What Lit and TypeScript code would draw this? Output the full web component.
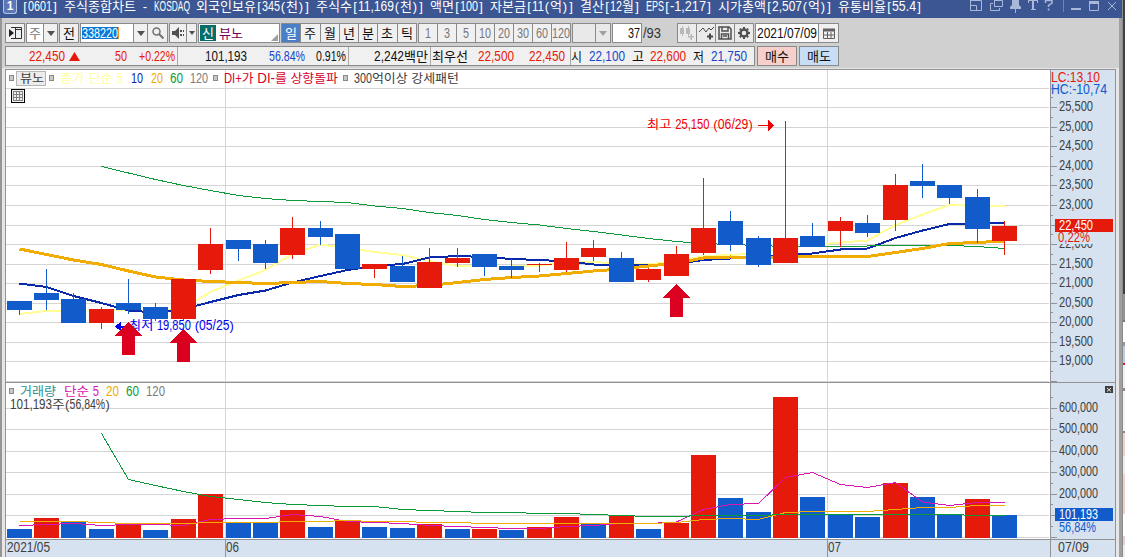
import { LitElement, html, svg, css, nothing } from "lit";
import { customElement } from "lit/decorators.js";

type Candle = [x: number, high: number, top: number, bottom: number, low: number, up: number, volTop: number, volUp: number];

// x, high, body top, body bottom, low, rising?, volume top, volume rising?
const CANDLES: Candle[] = [
  [19, 301, 301, 310, 315, 0, 529, 0],
  [46, 269, 293, 300, 310, 0, 518, 1],
  [73, 293, 299, 323, 323, 0, 522, 0],
  [101, 307, 309, 323, 329, 1, 529, 0],
  [128, 279, 303, 310, 314, 0, 524, 1],
  [155, 303, 307, 319, 321, 0, 530, 0],
  [183, 279, 279, 319, 320, 1, 519, 1],
  [210, 228, 244, 270, 274, 1, 494, 1],
  [238, 240, 240, 249, 261, 0, 523, 0],
  [265, 240, 244, 263, 269, 0, 523, 0],
  [292, 217, 228, 255, 259, 1, 510, 1],
  [320, 221, 228, 237, 245, 0, 527, 0],
  [347, 234, 234, 269, 269, 0, 520, 1],
  [374, 264, 264, 269, 278, 1, 527, 0],
  [402, 256, 266, 282, 282, 0, 528, 0],
  [429, 248, 262, 288, 288, 1, 524, 1],
  [457, 248, 258, 263, 267, 1, 529, 0],
  [484, 254, 254, 267, 276, 0, 529, 1],
  [511, 259, 266, 270, 278, 0, 530, 0],
  [539, 263, 264, 265, 272, 1, 527, 1],
  [566, 242, 258, 270, 272, 1, 517, 1],
  [593, 240, 248, 257, 261, 1, 524, 0],
  [621, 252, 258, 282, 282, 0, 515, 1],
  [648, 268, 269, 280, 282, 1, 529, 0],
  [676, 246, 254, 276, 276, 1, 523, 1],
  [703, 178, 228, 253, 255, 1, 455, 1],
  [730, 211, 221, 245, 251, 0, 498, 0],
  [758, 236, 238, 265, 267, 0, 512, 0],
  [785, 121, 238, 263, 263, 1, 397, 1],
  [812, 223, 236, 247, 247, 0, 497, 0],
  [840, 217, 221, 231, 247, 1, 514, 0],
  [867, 215, 223, 233, 237, 0, 517, 0],
  [895, 174, 185, 220, 231, 1, 483, 1],
  [922, 164, 181, 186, 198, 0, 497, 0],
  [949, 185, 185, 198, 204, 0, 514, 0],
  [977, 189, 197, 229, 243, 0, 499, 1],
  [1004, 221, 226, 241, 255, 1, 515, 0],
];

const PRICE_LINES = [
  { cls: "ma5", from: 0, ys: [314, 311, 310.5, 310.5, 310, 312, 308, 292, 280.5, 270, 254, 244.5, 248, 252, 255, 261, 266, 266.5, 266.5, 265.5, 263, 262, 264, 264, 262, 256, 255, 253, 247, 245, 242.5, 240.5, 225, 214.5, 205, 206, 206] },
  { cls: "ma10", from: 0, ys: [283.5, 287, 296, 303, 310.5, 312.5, 309, 302, 295, 290.5, 282.5, 276, 270, 266, 264, 257.5, 256, 257, 259, 260, 261.5, 264.5, 265, 265.5, 264, 260, 258.5, 257, 254.5, 253.5, 249.5, 248.5, 238, 230.5, 224, 223.5, 223] },
  { cls: "ma60", from: 3, ys: [166.5, 173, 179.5, 185.5, 190.5, 195.5, 198.5, 200.5, 201.5, 202.5, 206, 208.5, 212.5, 215.5, 219.5, 222.5, 225, 228.5, 231.5, 235, 238.5, 241.5, 243.5, 244.5, 245.5, 246.5, 246.5, 246.5, 246, 245.5, 245.5, 245.5, 246.5, 248.5] },
  { cls: "ma20", from: 0, ys: [249, 254.5, 260, 264.5, 271, 277, 280, 281.5, 282.5, 283.5, 282.5, 281.5, 283.5, 284.5, 286.5, 285.5, 282.5, 279.5, 277.5, 276, 273.5, 271, 269, 266, 263, 258, 257, 258, 257, 256.5, 256.5, 256.5, 252.5, 248.5, 243.5, 242.5, 241] },
];

const VOLUME_LINES = [
  { cls: "vol5", from: 0, ys: [525.5, 524.5, 523.5, 525.5, 524.5, 524.5, 525.5, 519.5, 518.5, 518.5, 514.5, 516.5, 521.5, 522.5, 523.5, 525.5, 526.5, 527.5, 528.5, 528.5, 526.5, 525.5, 523.5, 523.5, 522, 509.5, 504.5, 503.5, 477.5, 472.5, 484.5, 487.5, 482.5, 502, 505.5, 502.5, 502.5] },
  { cls: "vol20", from: 0, ys: [521.5, 521.5, 521.5, 522.5, 523.5, 523.5, 523.5, 522.5, 522.5, 522.5, 521.5, 521.5, 520.5, 521.5, 521.5, 522.5, 522.5, 523.5, 523.5, 523.5, 523.5, 523.5, 523.5, 523.5, 522.5, 519.5, 518.5, 519.5, 512.5, 511.5, 511.5, 511.5, 509.5, 507.5, 507.5, 505.5, 505.5] },
  { cls: "ma60", from: 3, ys: [433.5, 479.5, 485.5, 491.5, 496.5, 499.5, 502.5, 504.5, 505.5, 506.5, 506.5, 509.5, 510.5, 511.5, 512.5, 512.5, 513.5, 513.5, 514.5, 515.5, 516.5, 516.5, 515.5, 515.5, 515.5, 514.5, 514.5, 514.5, 514.5, 514.5, 514.5, 514.5, 515.5, 515.5] },
];

const PRICE_ROWS: [number, string][] = [
  [88, ""], [107, "25,500"], [127, "25,000"], [146, "24,500"], [166, "24,000"],
  [185, "23,500"], [205, "23,000"], [225, ""], [244, "22,000"], [264, "21,500"],
  [283, "21,000"], [303, "20,500"], [322, "20,000"], [342, "19,500"], [361, "19,000"], [381, ""],
];

const VOLUME_ROWS: [number, string][] = [
  [408, "600,000"], [429, "500,000"], [451, "400,000"], [472, "300,000"], [494, "200,000"], [515, ""], [537, ""],
];

const TITLE = "[0601] 주식종합차트 - KOSDAQ 외국인보유[345(천)] 주식수[11,169(천)] 액면[100] 자본금[11(억)] 결산[12월] EPS[-1,217] 시가총액[2,507(억)] 유통비율[55.4]";

// text, width, colour class
const QUOTES: [string, number, string][] = [
  ["22,450", 36, "red"], ["▲", 0, ""], ["50", 12, "red"], ["+0.22%", 36, "red"], ["|", 0, ""],
  ["101,193", 42, ""], ["56.84%", 36, "blue"], ["0.91%", 30, ""], ["|", 0, ""],
  ["2,242백만", 54, ""], ["|", 0, ""],
  ["최우선", 36, ""], ["22,500", 36, "red"], ["22,450", 36, "red"], ["|", 0, ""],
  ["시", 11, ""], ["22,100", 36, "blue"], ["고", 12, ""], ["22,600", 36, "red"], ["저", 11, ""], ["21,750", 36, "blue"],
];

const isHangul = (s: string) => /[가-힣]/.test(s);

function units(s: string, mono: boolean) {
  let n = 0;
  for (const c of s) {
    if (isHangul(c)) n += 2;
    else if (!mono && /[\s,.:]/.test(c)) n += 0.6;
    else if (!mono && /[()]/.test(c)) n += 0.75;
    else n += 1;
  }
  return n;
}

// Hangul takes two cells and everything else one, scaled so the run fills the width.
// Brackets sit in the middle of their cell and keep their own shape.
function runs(x: number, y: number, width: number, text: string, cls = "", mono = false) {
  const scale = width / units(text, mono);
  let at = x;
  return (text.match(/[가-힣]+|[()[\]]|[^가-힣\s()[\]]+|\s+/g) ?? []).map((run) => {
    const w = units(run, mono) * scale;
    const left = at;
    at += w;
    if (!run.trim()) return nothing;
    if (/^[()[\]-]$/.test(run)) {
      return svg`<text class="en mid ${cls}" x=${left + w / 2} y=${y}>${run}</text>`;
    }
    return svg`<text class="${isHangul(run) ? "ko" : "en"} ${cls}" x=${left} y=${y} textLength=${w} lengthAdjust="spacingAndGlyphs">${run}</text>`;
  });
}

const fit = (text: string, width: number, cls = "") =>
  html`<svg class="fit" width=${width} height="14">${runs(0, 12, width, text, cls, true)}</svg>`;

const chevron = () => html`<svg width="8" height="5"><path d="M0 0h8L4 5z" fill="currentColor"/></svg>`;

@customElement("stock-chart")
export class StockChart extends LitElement {
  static styles = css`
    :host {
      display: block;
      height: 488px;
    }
    svg {
      display: block;
    }
    text {
      font-size: 14px;
      font-family: "Liberation Sans", "Noto Sans CJK KR", sans-serif;
      fill: #404040;
    }
    text.ko {
      font-family: "Noto Sans CJK KR", sans-serif;
      font-size: 12.5px;
    }
    text.mid {
      font-size: 13px;
      text-anchor: middle;
    }
    rect,
    line,
    polyline,
    .crisp {
      shape-rendering: crispEdges;
    }
    polyline {
      fill: none;
    }
    .ma5 { stroke: #ffff96; stroke-width: 2; }
    .ma10 { stroke: #0a28aa; stroke-width: 2; }
    .ma20 { stroke: #f0ac00; stroke-width: 3; }
    .ma60 { stroke: #0a9a37; stroke-width: 1; }
    .vol5 { stroke: #dc14b4; stroke-width: 1; }
    .vol20 { stroke: #f0ac00; stroke-width: 1; }
    .up { fill: #e61a0a; }
    .down { fill: #115bcb; }
    .grid { stroke: #d5d5d5; }
    .edge { stroke: #929292; }
    .axis { fill: #d6e2f0; }
    .signal { fill: #dc0020; }
    text.c-pale { fill: #ffff96; }
    text.c-navy { fill: #0a28aa; }
    text.c-gold { fill: #f0ac00; }
    text.c-green { fill: #0a9a37; }
    text.c-gray { fill: #7c7c7c; }
    text.c-crimson { fill: #d4002a; }
    text.c-teal { fill: #2d9295; }
    text.c-pink { fill: #dc14b4; }
    text.c-low { fill: #0000f0; }
    text.c-high { fill: #f00000; }
    text.c-red { fill: #e61a0a; }
    text.c-blue { fill: #115bcb; }
    text.c-white { fill: #fff; }
  `;

  line({ cls, from, ys }: { cls: string; from: number; ys: number[] }) {
    const points = ys.map((y, i) => `${CANDLES[i + from][0] + 0.5},${y}`).join(" ");
    return svg`<polyline class=${cls} points=${points} />`;
  }

  row([y, label]: [number, string]) {
    return svg`
      <line class="grid" x1="6" x2="1049" y1=${y + 0.5} y2=${y + 0.5} />
      <line class="edge" x1="1051" x2="1057" y1=${y + 0.5} y2=${y + 0.5} />
      ${label ? runs(1059, y + 4, label.length > 6 ? 39 : 34, label) : nothing}
    `;
  }

  minor(y: number) {
    return svg`<line class="edge" x1="1051" x2="1053" y1=${y + 0.5} y2=${y + 0.5} />`;
  }

  candle([x, high, top, bottom, low, up]: Candle) {
    return svg`<g class=${up ? "up" : "down"}>
      <rect x=${x} y=${high} width="1" height=${low - high} />
      <rect x=${x - 12} y=${top} width="25" height=${bottom - top} />
    </g>`;
  }

  signal(x: number, y: number) {
    return svg`<path class="signal crisp" transform="translate(${x} ${y})" d="M.5 0L14 14H7v19H-6V14h-7z" />`;
  }

  marker(x: number, y: number) {
    return svg`<rect x=${x + 0.5} y=${y + 0.5} width="4" height="5" fill="#c8c8c8" stroke="#8a8a8a" />`;
  }

  render() {
    return html`
      <svg width="1111" height="488" viewBox="5 69 1111 488">
        <rect x="5" y="69" width="1111" height="488" fill="#fff" />
        <rect class="axis" x="1051" y="70" width="64" height="487" />
        <rect class="axis" x="6" y="540" width="1109" height="17" />
        ${PRICE_ROWS.map((r) => this.row(r))}
        ${VOLUME_ROWS.map((r) => this.row(r))}
        ${[97, 117, 136, 156, 175, 195, 215, 234, 254, 273, 293, 312, 332, 351, 371, 397, 418, 440, 461, 483, 504, 526].map((y) => this.minor(y))}
        ${[225.5, 827.5].map(
          (x) => svg`
            <line class="grid" x1=${x} x2=${x} y1="70" y2="539" />
            <line class="edge" x1=${x} x2=${x} y1="540" y2="557" />`
        )}
        <path class="edge crisp" fill="none" d="M5.5 557V69.5H1115.5V557M6 382.5H1115M6 539.5H1115M1050.5 70V557" />

        ${PRICE_LINES.map((l) => this.line(l))}
        ${CANDLES.map((c) => this.candle(c))}
        ${CANDLES.map(
          (c) => svg`<rect class=${c[7] ? "up" : "down"} x=${c[0] - 12} y=${c[6]} width="25" height=${538 - c[6]} />`
        )}
        ${VOLUME_LINES.map((l) => this.line(l))}

        ${runs(129, 330, 105, "최저 19,850 (05/25)", "c-low")}
        <path class="crisp" fill="#0000f0" d="M115 326.5l6-5v4h4v2h-4v4z" />
        ${runs(647, 129, 106, "최고 25,150 (06/29)", "c-high")}
        <path class="crisp" fill="#f00000" d="M773.5 125.5l-6-6v5.500h-9.500v1h9.500v5.500z" />
        ${this.signal(128, 322)} ${this.signal(183, 329)} ${this.signal(676, 284)}

        ${this.marker(9, 75)}
        <rect x="16.500" y="71.500" width="29" height="14" fill="#ececec" stroke="#b4b4b4" />
        ${runs(20, 83, 24, "뷰노")} ${this.marker(49, 75)}
        ${runs(60, 83, 63, "종가 단순 5", "c-pale")}
        ${runs(131, 83, 12, "10", "c-navy")} ${runs(151, 83, 12, "20", "c-gold")}
        ${runs(170, 83, 13, "60", "c-green")} ${runs(190, 83, 18, "120", "c-gray")}
        ${this.marker(213, 75)} ${runs(224, 83, 114, "DI+가 DI-를 상향돌파", "c-crimson")}
        ${this.marker(343, 75)} ${runs(354, 83, 105, "300억이상 강세패턴")}

        <rect x="11.500" y="89.500" width="13" height="13" fill="#f0f0f0" stroke="#000" />
        <path class="crisp" fill="none" stroke="#808080" d="M13.500 91.500h9v9h-9zM13 94.500h10M13 97.500h10M16.500 92v9M19.500 92v9" />

        ${this.marker(9, 388)} ${runs(20, 396, 36, "거래량", "c-teal")}
        ${runs(64, 396, 35, "단순 5", "c-pink")} ${runs(106, 396, 13, "20", "c-gold")}
        ${runs(126, 396, 13, "60", "c-green")} ${runs(146, 396, 19, "120", "c-gray")}
        ${runs(10, 409, 100, "101,193주(56,84%)")}

        ${runs(1051, 82, 49, "LC:13,10", "c-red")}
        ${runs(1051, 94, 56, "HC:-10,74", "c-blue")}
        <rect class="axis" x="1058" y="232" width="38" height="12" />
        <rect class="up" x="1055" y="219" width="58" height="13" />
        ${runs(1059, 230, 34, "22,450", "c-white")} ${runs(1058, 242, 32, "0,22%", "c-red")}
        <rect class="down" x="1055" y="508" width="58" height="13" />
        ${runs(1059, 519, 39, "101,193", "c-white")} ${runs(1059, 532, 37, "56,84%", "c-blue")}

        <rect x="1105" y="386" width="8" height="7" fill="#404040" />
        <path stroke="#e8e8e8" d="M1107 388l4 3.500M1111 388l-4 3.500" />

        ${runs(7, 552, 43, "2021/05")} ${runs(226, 552, 13, "06")}
        ${runs(828, 552, 13, "07")} ${runs(1058, 552, 31, "07/09")}
      </svg>
    `;
  }
}

@customElement("app-root")
export class AppRoot extends LitElement {
  static styles = css`
    :host {
      display: flex;
      width: 1125px;
      height: 557px;
      overflow: hidden;
      background: #d0d0d0;
      color: #101010;
    }
    svg {
      display: block;
      flex: none;
    }
    .fit {
      overflow: visible;
    }
    text {
      font-size: 14.5px;
      font-family: "Liberation Sans", "Noto Sans CJK KR", sans-serif;
      fill: currentColor;
    }
    text.ko {
      font-family: "Noto Sans CJK KR", sans-serif;
      font-size: 13px;
    }
    text.mid {
      font-size: 13px;
      text-anchor: middle;
    }
    .red { color: #e61a0a; }
    .blue { color: #1748c8; }
    .window {
      width: 1122px;
      display: flex;
      flex-direction: column;
    }
    header {
      height: 18px;
      flex: none;
      display: flex;
      align-items: flex-start;
      background: #3b5693;
      color: #fff;
    }
    .badge {
      box-sizing: border-box;
      width: 14px;
      height: 14px;
      margin: 0 5px 0 3px;
      border: 1px solid #b4c4ea;
      border-top: 0;
      border-radius: 0 0 3px 3px;
      background: #5b77b8;
      font: bold 12px/12px "Liberation Sans", sans-serif;
      text-align: center;
    }
    .title {
      margin-top: -2px;
    }
    .controls {
      margin-left: 47px;
    }
    .body {
      flex: 1;
      border-left: 2px solid #969696;
      border-right: 3px solid #a0a0a0;
    }
    .tools {
      height: 50px;
      box-sizing: border-box;
      padding: 5px 0 0 3px;
      display: flex;
      flex-direction: column;
      gap: 3px;
    }
    .row {
      display: flex;
      height: 20px;
      gap: 1px;
    }
    .box {
      box-sizing: border-box;
      height: 20px;
      border: 1px solid #8a8a8a;
      background: #f0f0f0;
      display: flex;
      align-items: center;
      justify-content: center;
      flex: none;
    }
    .box > .part {
      height: 18px;
      display: flex;
      align-items: center;
      justify-content: center;
      color: #505050;
    }
    .box > .part + .part {
      border-left: 1px solid #8a8a8a;
    }
    .grow {
      flex: 1;
    }
    .w13 { width: 13px; }
    .w14 { width: 14px; }
    .w19 { width: 19px; }
    .w9 { width: 9px; }
    .paper {
      background: #fff;
    }
    .box > .muted {
      color: #777;
    }
    .sq { width: 20px; }
    .period { width: 32px; }
    .code { width: 88px; }
    .code .paper {
      justify-content: flex-start;
      padding-left: 1px;
    }
    .picked {
      height: 12px;
      width: 36px;
      background: #0a78d7;
      color: #fff;
      border-right: 1px solid #f09030;
      display: flex;
      align-items: center;
    }
    .sound { width: 28px; }
    .name {
      width: 82px;
      justify-content: flex-start;
      gap: 3px;
      padding-left: 1px;
      color: #780050;
      background: #fff;
    }
    .tag {
      width: 16px;
      height: 16px;
      background: #056e68;
      color: #fff;
      display: flex;
      align-items: center;
      justify-content: center;
    }
    .corner {
      align-self: flex-end;
      margin: 0 1px 1px auto;
    }
    .box > .unit {
      color: #101010;
      flex: 1;
    }
    .box > .unit.on {
      background: #4a7fc8;
      color: #fff;
    }
    .units { width: 78px; }
    .ticks { width: 59px; margin-left: -2px; }
    .minutes { width: 153px; }
    .box > .minute {
      flex: 1;
      color: #777;
    }
    .blank { width: 39px; background: #e9e9e9; }
    .box.blank > .part { color: #a0a0a0; }
    .count { width: 30px; justify-content: flex-end; padding-right: 1px; }
    .total {
      width: 33px;
      display: flex;
      align-items: center;
      color: #333;
    }
    .icons { width: 77px; }
    .icons .grow { background: #ebebeb; }
    .date { width: 84px; }
    .box.date > .paper { color: #101010; }
    .quotes {
      width: 750px;
      display: grid;
      justify-content: start;
      justify-items: end;
      grid-template-columns:
        59px 15px 47px 48px 3px
        69px 58px 41px 3px
        79px 3px
        37px 46px 51px 6px
        11px 43px 19px 42px 18px 43px;
    }
    .sep {
      width: 100%;
      box-sizing: border-box;
      height: 18px;
      border-right: 1px solid #a8a8a8;
    }
    .order { width: 40px; margin-left: 1px; }
    .buy { background: #f7d0cb; }
    .sell { background: #c8def4; }
    .pane {
      border: solid #e6e6e6;
      border-width: 1px 3px 0;
    }
    .behind {
      width: 3px;
      box-sizing: border-box;
      border-left: 1px solid #8c8c8c;
      background: linear-gradient(
        #3c4248 0 294px, #929496 294px 320px, #777 320px 322px, #fff 322px 342px, #999 342px 346px,
        #bccbe0 346px 363px, #e02020 363px 365px, #f0f0f0 365px 388px, #a08080 388px 391px, #f4f4f4 391px 431px,
        #888 431px 433px, #f6cfc9 433px 456px, #eee 456px 474px, #f6cfc9 474px 514px, #fff 514px 536px,
        #e5d0d0 536px 545px, #eee 545px
      );
    }
  `;

  controls() {
    return html`<svg class="controls" width="150" height="18" viewBox="968 0 150 18" fill="none" stroke="#a9b7d8">
      <path d="M969.500 0V10.500H980.500V.5H969M970 5.500H975.500V10" />
      <path d="M993.500 0V6.500H1001.500V.5H993M992 3.500H989.500V10.500H998.500V8" />
      <path d="M1011 0h7v5l2 2v2h-5v4h-1V9h-5V7l2-2z" fill="#a9b7d8" stroke="none" />
      <path d="M1027 .5h10M1027.500 0v3M1036.500 0v3M1030 9.500h5" />
      <path d="M1032 0v9" stroke-width="2" />
      <path d="M1044.500 3V.5H1051V3l-3.500 2.500V7M1047.500 8.500v2" stroke-width="1.500" />
      <path d="M1062.500 0V12" stroke="#77839f" />
      <path d="M1070 9h10" stroke-width="2" />
      <path d="M1088.500 2v8.500h9V2" /><path d="M1088 2.500h10" stroke-width="3" />
      <path d="M1107 2l8 8M1115 2l-8 8" />
    </svg>`;
  }

  quote([text, width, cls]: [string, number, string]) {
    if (text === "|") return html`<span class="sep"></span>`;
    if (text === "▲")
      return html`<svg class="red" width="11" height="9"><path d="M5.500 0l5.500 9H0z" fill="currentColor" /></svg>`;
    return html`<span class=${cls}>${fit(text, width)}</span>`;
  }

  render() {
    return html`
      <div class="window">
        <header>
          <span class="badge">1</span>
          <svg class="title fit" width="900" height="18">${runs(0, 13, 900, TITLE, "", true)}</svg>
          ${this.controls()}
        </header>
        <div class="body">
          <div class="tools">
            <div class="row">
              <div class="box sq">
                <svg width="14" height="14" fill="none" stroke="#303030">
                  <path d="M3 1.500h10.500v11H3M7.500 2v10M8 3.500h5" /><path d="M1 3l5 4-5 4z" fill="#202020" stroke="none" />
                </svg>
              </div>
              <div class="box period">
                <span class="part grow paper muted">${fit("주", 12)}</span>
                <span class="part w13">${chevron()}</span>
              </div>
              <div class="box sq">${fit("전", 12)}</div>
              <div class="box code">
                <span class="part grow paper"><span class="picked">${fit("338220", 36)}</span></span>
                <span class="part w13">${chevron()}</span>
                <span class="part w19">
                  <svg width="12" height="12" fill="none" stroke="#707070">
                    <circle cx="4.500" cy="4.500" r="3.500" stroke-width="1.500" /><path d="M7 7l4.500 4.500" stroke-width="2" />
                  </svg>
                </span>
              </div>
              <div class="box sound">
                <span class="part grow">
                  <svg width="13" height="12" fill="#505050">
                    <path d="M0 4h3l4-4v12L3 8H0zM8 3h2v2H8zM8 7h2v2H8zM11 3h1v2h-1zM11 7h1v2h-1z" />
                  </svg>
                </span>
                <span class="part w9"><svg width="6" height="4"><path d="M0 0h6L3 4z" fill="#505050" /></svg></span>
              </div>
              <div class="box name">
                <span class="tag">${fit("신", 12)}</span>${fit("뷰노", 24)}
                <svg class="corner" width="7" height="7"><path d="M7 0v7H0z" fill="#a0a0a0" /></svg>
              </div>
              <div class="box units">
                ${["일", "주", "월", "년"].map((u, i) => html`<span class="part unit ${i ? "" : "on"}">${fit(u, 12)}</span>`)}
              </div>
              <div class="box ticks">
                ${["분", "초", "틱"].map((u) => html`<span class="part unit">${fit(u, 12)}</span>`)}
              </div>
              <div class="box minutes">
                ${["1", "3", "5", "10", "20", "30", "60", "120"].map(
                  (m) => html`<span class="part minute">${fit(m, m.length * 6)}</span>`
                )}
              </div>
              <div class="box blank"><span class="part grow"></span><span class="part w14">${chevron()}</span></div>
              <div class="box count paper">${fit("37", 12)}</div>
              <div class="total">${fit("/93", 18)}</div>
              <div class="box icons">
                <span class="part grow">
                  <svg width="14" height="14" fill="#b8b8b8">
                    <path d="M0 2h4v6H0zM2 0h1v10H2zM6 2h4v6H6zM8 0h1v10H8zM8 10h6v1.500H8zM10.500 8H12v6h-1.500z" />
                  </svg>
                </span>
                <span class="part grow">
                  <svg width="15" height="14" fill="none" stroke="#484848">
                    <path d="M0 6l4-4 3 4 3-4 2 2 3-3" /><path d="M8 10.500h6M11 7.500v6" stroke-width="2" />
                  </svg>
                </span>
                <span class="part grow">
                  <svg width="14" height="14" fill="none" stroke="#505050" stroke-width="1.500">
                    <path d="M1 1h10l2 2v10H1zM4 1v4h6V1M3.500 13V8h7v5M5 10h4" />
                  </svg>
                </span>
                <span class="part grow">
                  <svg width="14" height="14" fill="none" stroke="#505050">
                    <circle cx="7" cy="7" r="3.500" stroke-width="2.500" />
                    <path d="M7 1v2M7 11v2M1 7h2M11 7h2M2.800 2.800l1.200 1.200M10 10l1.200 1.200M11.200 2.800L10 4M4 10l-1.200 1.200" stroke-width="2" />
                  </svg>
                </span>
              </div>
              <div class="box date">
                <span class="part grow paper">${fit("2021/07/09", 60)}</span>
                <span class="part w19">
                  <svg width="12" height="11" fill="none" stroke="#606060">
                    <path d="M.5 1.500h11v9H.5zM4.500 4v6M8 4v6M1 7h10" /><path d="M0 2h12" stroke-width="3" />
                  </svg>
                </span>
              </div>
            </div>
            <div class="row">
              <div class="box quotes">${QUOTES.map((q) => this.quote(q))}</div>
              <div class="box order buy">${fit("매수", 24)}</div>
              <div class="box order sell">${fit("매도", 24)}</div>
            </div>
          </div>
          <div class="pane"><stock-chart></stock-chart></div>
        </div>
      </div>
      <div class="behind"></div>
    `;
  }
}
